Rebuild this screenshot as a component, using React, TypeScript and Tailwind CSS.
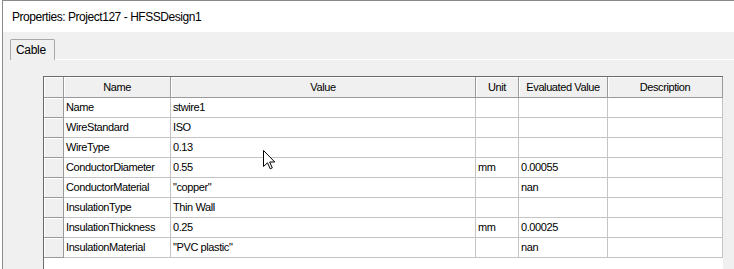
import React from "react";

const cols = [20, 107, 305, 43, 89, 115];
const headers = ["", "Name", "Value", "Unit", "Evaluated Value", "Description"];

const rows: string[][] = [
  ["Name", "stwire1", "", ""],
  ["WireStandard", "ISO", "", ""],
  ["WireType", "0.13", "", ""],
  ["ConductorDiameter", "0.55", "mm", "0.00055"],
  ["ConductorMaterial", "\"copper\"", "", "nan"],
  ["InsulationType", "Thin Wall", "", ""],
  ["InsulationThickness", "0.25", "mm", "0.00025"],
  ["InsulationMaterial", "\"PVC plastic\"", "", "nan"],
];

const Cursor = () => (
  <svg className="absolute left-[263px] top-[150px]" width="13" height="20" viewBox="0 0 13 20">
    <path
      d="M0.5 0.5 L0.5 16.5 L4.5 12.8 L7.2 18.8 L9.3 17.9 L6.7 12 L11.8 12 Z"
      fill="#fff"
      stroke="#000"
      strokeWidth="1"
      strokeLinejoin="miter"
    />
  </svg>
);

export default function App() {
  return (
    <div className="relative w-[734px] h-[269px] overflow-hidden bg-white font-['Liberation_Sans',Arial,sans-serif] text-black">
      <div className="ml-[2px] h-full flex flex-col border-l border-t border-[#8a8a8a]">
        {/* Title */}
        <div className="h-[31px] shrink-0 bg-white flex items-center pl-[9px] text-[12px] tracking-[-0.45px]">
          Properties: Project127 - HFSSDesign1
        </div>

        {/* Panel */}
        <div className="flex-1 bg-[#f0f0f0] pt-[7px] pl-[7px]">
          <div className="flex">
            <div className="w-[45px] h-[21px] bg-[#f0f0f0] border-l border-t border-r border-[#a8a8a8] rounded-t-[2px] flex items-center pl-[5px] text-[12px] tracking-[-0.3px] relative z-10 -mb-px">
              Cable
            </div>
          </div>
          <div className="border-t border-white pt-[16px] pl-[33px]">
            <div className="w-[680px] border-l border-t border-[#6b6b6b] bg-white text-[11px] tracking-[-0.4px] h-[220px]">
              {/* header */}
              <div className="flex h-[21px]">
                {headers.map((h, i) => (
                  <div
                    key={i}
                    style={{ width: cols[i] }}
                    className="shrink-0 bg-[#f0f0f0] border-r border-b border-[#9a9a9a] shadow-[inset_1px_1px_0_#ffffff] flex items-center justify-center"
                  >
                    {h}
                  </div>
                ))}
              </div>
              {rows.map((r, ri) => (
                <div key={ri} className="flex h-[20px]">
                  <div
                    style={{ width: cols[0] }}
                    className="shrink-0 bg-[#f0f0f0] border-r border-b border-[#9a9a9a] shadow-[inset_1px_1px_0_#ffffff]"
                  />
                  {[r[0], r[1], r[2], r[3], ""].map((c, ci) => (
                    <div
                      key={ci}
                      style={{ width: cols[ci + 1] }}
                      className="shrink-0 border-r border-b border-[#c4c4c4] flex items-center pl-[2px] whitespace-nowrap overflow-hidden"
                    >
                      {c}
                    </div>
                  ))}
                </div>
              ))}
            </div>
          </div>
        </div>
      </div>
      <Cursor />
    </div>
  );
}
